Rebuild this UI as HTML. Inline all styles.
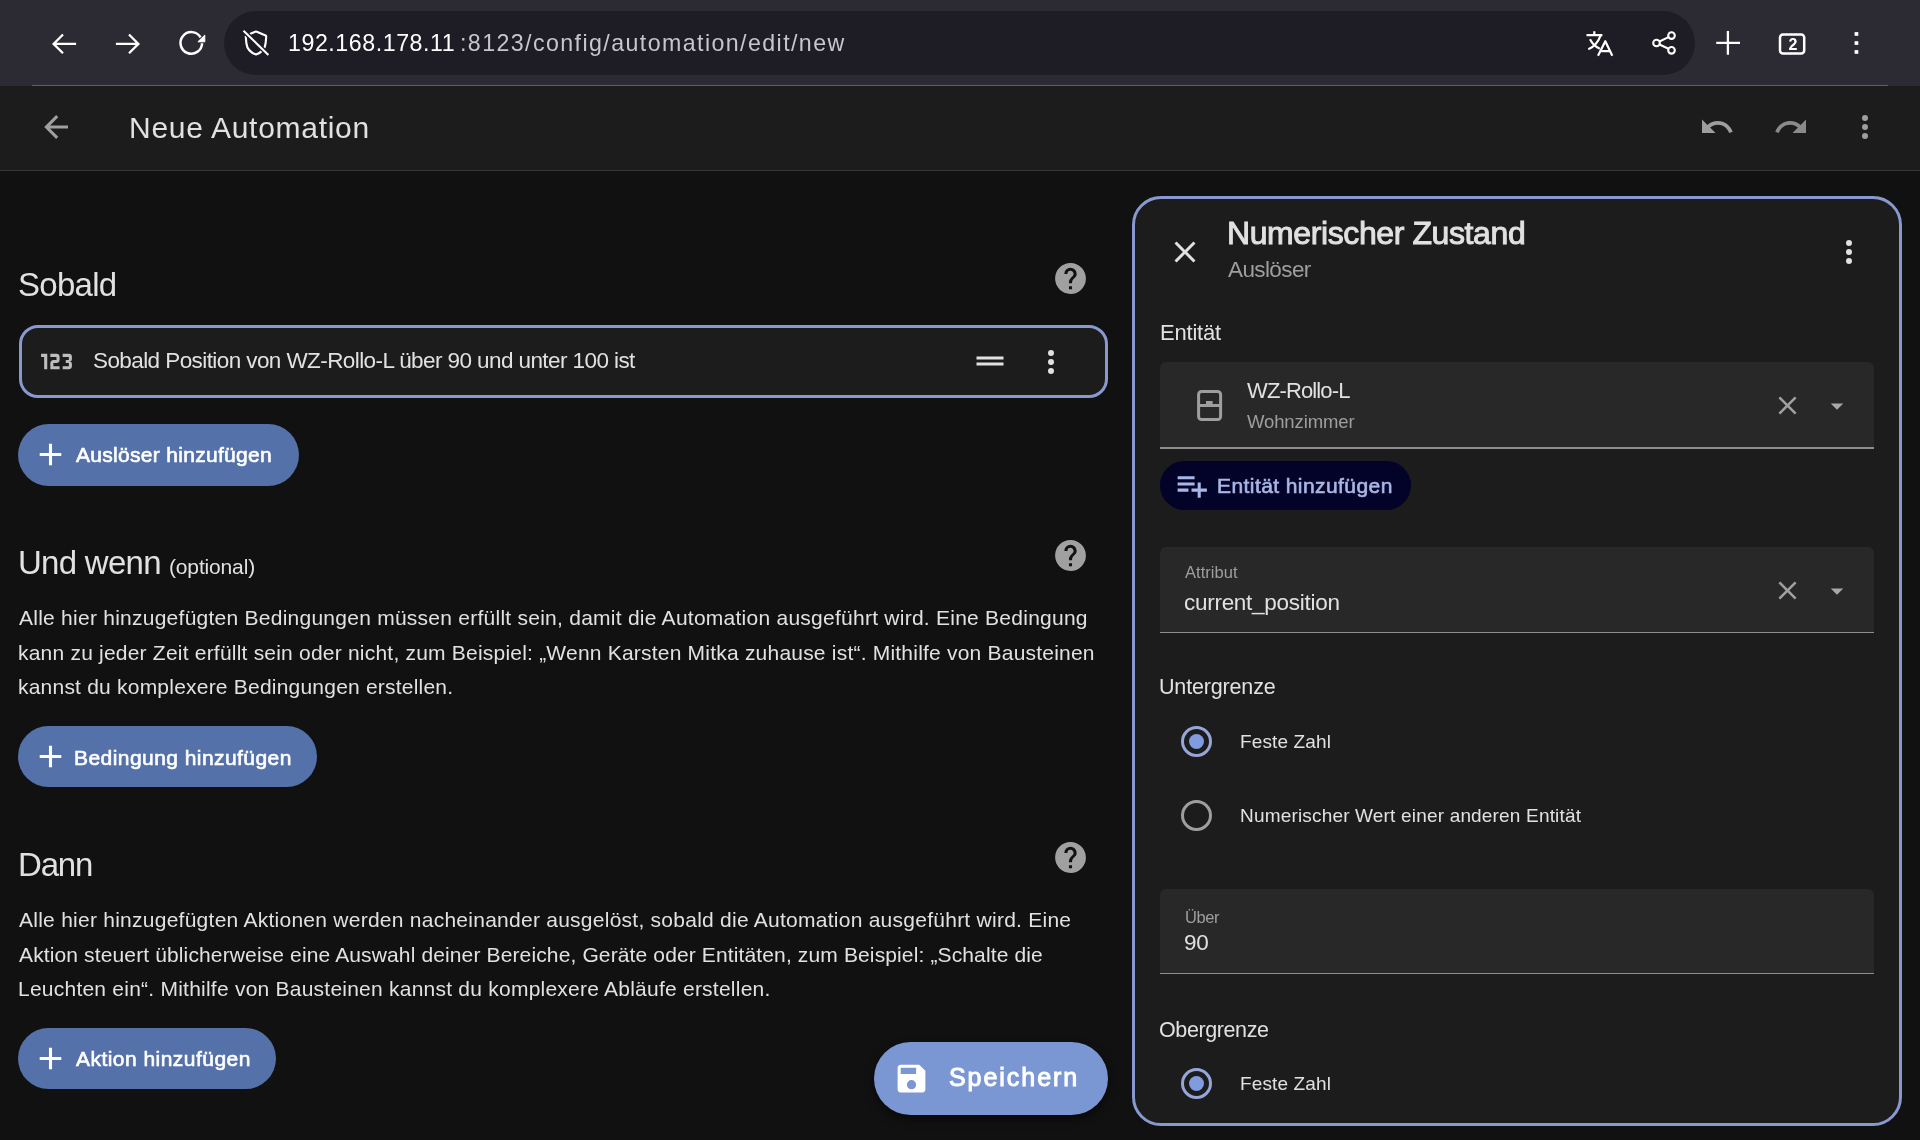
<!DOCTYPE html>
<html><head><meta charset="utf-8"><style>
html,body{margin:0;padding:0;width:1920px;height:1140px;overflow:hidden;background:#111111;font-family:"Liberation Sans",sans-serif;}
.a{position:absolute;box-sizing:border-box;}
.t{position:absolute;white-space:nowrap;line-height:1;will-change:transform;}
.ic{position:absolute;overflow:visible;}
</style></head><body>
<div class="a" style="left:0;top:0;width:1920px;height:86px;background:#2c2a33;"></div>
<div class="a" style="left:32px;top:85px;width:1856px;height:1px;background:#5f5d66;"></div>
<div class="a" style="left:224px;top:11px;width:1471px;height:64px;border-radius:32px;background:#1e1c24;"></div>
<div class="a" style="left:0;top:86px;width:1920px;height:84px;background:#1c1c1c;"></div>
<div class="a" style="left:0;top:170px;width:1920px;height:1px;background:#363636;"></div>
<!-- trigger card -->
<div class="a" style="left:19px;top:325px;width:1089px;height:73px;border:3px solid #8899cf;border-radius:19px;background:#1c1c1c;"></div>
<!-- buttons -->
<div class="a" style="left:18px;top:424px;width:281px;height:62px;border-radius:31px;background:#5571a9;"></div>
<div class="a" style="left:18px;top:726px;width:299px;height:61px;border-radius:31px;background:#5571a9;"></div>
<div class="a" style="left:18px;top:1028px;width:258px;height:61px;border-radius:31px;background:#5571a9;"></div>
<!-- FAB -->
<div class="a" style="left:874px;top:1042px;width:234px;height:73px;border-radius:37px;background:#7b97d3;box-shadow:0 4px 10px rgba(0,0,0,0.5);"></div>
<!-- panel -->
<div class="a" style="left:1132px;top:196px;width:770px;height:930px;border:3px solid #8899cf;border-radius:29px;background:#1c1c1c;"></div>
<div class="a" style="left:1160px;top:362px;width:714px;height:87px;border-radius:6px 6px 0 0;background:#282828;border-bottom:2px solid #8e8e8e;"></div>
<div class="a" style="left:1160px;top:461px;width:251px;height:49px;border-radius:25px;background:#03032a;"></div>
<div class="a" style="left:1160px;top:547px;width:714px;height:86px;border-radius:6px 6px 0 0;background:#282828;border-bottom:1px solid #8e8e8e;"></div>
<div class="a" style="left:1160px;top:889px;width:714px;height:85px;border-radius:6px 6px 0 0;background:#282828;border-bottom:1px solid #8e8e8e;"></div>
<!-- radios -->
<div class="a" style="left:1181px;top:726px;width:31px;height:31px;border-radius:50%;border:3px solid #97a6d8;"></div>
<div class="a" style="left:1189px;top:734px;width:15px;height:15px;border-radius:50%;background:#819be0;"></div>
<div class="a" style="left:1181px;top:800px;width:31px;height:31px;border-radius:50%;border:3px solid #9e9e9e;"></div>
<div class="a" style="left:1181px;top:1068px;width:31px;height:31px;border-radius:50%;border:3px solid #97a6d8;"></div>
<div class="a" style="left:1189px;top:1076px;width:15px;height:15px;border-radius:50%;background:#819be0;"></div>
<!-- cover icon -->
<svg class="ic" style="left:1190px;top:385px;width:40px;height:40px" viewBox="0 0 40 40"><rect x="8.6" y="6.5" width="22" height="28" rx="3" fill="none" stroke="#9e9e9e" stroke-width="3"/><line x1="8.6" y1="20.5" x2="30.6" y2="20.5" stroke="#9e9e9e" stroke-width="3"/><rect x="16" y="16" width="6.6" height="4" fill="#9e9e9e"/></svg>
<svg class="ic" style="left:0;top:0;width:1920px;height:86px" viewBox="0 0 1920 86" fill="none" stroke="#ffffff" stroke-width="2.3">
<path d="M76.1,43.9H53.5M63,34.5L53.6,43.9L63,53.3"/>
<path d="M115.9,43.9H138.5M129,34.5L138.4,43.9L129,53.3"/>
<path d="M200.56,37.34A10.8,10.8 0 1 0 202.09,43.28" stroke-width="2.5"/>
<path d="M204.8,35.1L204.8,41.8L197.9,41.8Z" fill="#ffffff" stroke="#ffffff" stroke-width="1" stroke-linejoin="miter"/>
<path d="M255.2,31.7Q256,31.3 256.8,31.7L265.6,35.5Q266.3,35.9 266.2,36.8L265.6,43.5Q264.6,51.5 256,54.5Q247.4,51.5 246.4,43.5L245.8,36.8Q245.7,35.9 246.4,35.5Z" stroke-width="2.1" stroke-linejoin="round"/>
<path d="M243.5,30.8L268.4,54.9" stroke="#1e1c24" stroke-width="4.8"/>
<path d="M243.5,30.8L268.4,54.9" stroke-width="2.1"/>
<g stroke-width="2.2" stroke-linejoin="round">
<path d="M1594.3,31.3V35.1M1586.5,35.1H1602.4M1600.6,35.6Q1596.5,46 1588.3,49.3M1590,39.3Q1593.5,46 1599.8,48.8"/>
<path d="M1598,55.7L1605.3,41.2L1612.3,55.7M1600.3,51.1H1609.8"/>
</g>
<g stroke-width="2.1">
<circle cx="1671.5" cy="35.6" r="3.3"/><circle cx="1656.5" cy="43" r="3.3"/><circle cx="1671.5" cy="50.3" r="3.3"/>
<path d="M1659.5,41.5L1668.5,37.1M1659.5,44.5L1668.5,48.8"/>
</g>
<path d="M1716.2,42.9H1740M1727.9,31V54.8" stroke-width="2.3"/>
<rect x="1780" y="34.45" width="24.2" height="19.1" rx="3" stroke-width="2.5"/>
<g fill="#ffffff" stroke="none"><rect x="1854.6" y="32.1" width="3.7" height="3.7"/><rect x="1854.6" y="41.2" width="3.7" height="3.7"/><rect x="1854.6" y="50.1" width="3.7" height="3.7"/></g>
</svg>
<div class="a" style="left:1783.8px;top:36.8px;width:18px;text-align:center;line-height:1;font-size:16px;font-weight:700;color:#fff;will-change:transform;">2</div>
<svg class="ic" style="left:38.00px;top:109.00px;width:36px;height:36px;" viewBox="0 0 24 24"><path fill="#a0a0a0" d="M20,11V13H8L13.5,18.5L12.08,19.92L4.16,12L12.08,4.08L13.5,5.5L8,11H20Z"/></svg><svg class="ic" style="left:1698.50px;top:109.00px;width:36px;height:36px;" viewBox="0 0 24 24"><path fill="#9e9e9e" d="M12.5,8C9.85,8 7.45,9 5.6,10.6L2,7V16H11L7.38,12.38C8.77,11.22 10.54,10.5 12.5,10.5C16.04,10.5 19.05,12.81 20.1,16L22.47,15.22C21.08,11.03 17.15,8 12.5,8Z"/></svg><svg class="ic" style="left:1772.50px;top:109.00px;width:36px;height:36px;" viewBox="0 0 24 24"><path fill="#8a8a8a" d="M18.4,10.6C16.55,9 14.15,8 11.5,8C6.85,8 2.92,11.03 1.54,15.22L3.9,16C4.95,12.81 7.95,10.5 11.5,10.5C13.45,10.5 15.23,11.22 16.62,12.38L13,16H22V7L18.4,10.6Z"/></svg><svg class="ic" style="left:1846.50px;top:109.30px;width:36px;height:36px;" viewBox="0 0 24 24"><path fill="#9e9e9e" d="M12,16A2,2 0 0,1 14,18A2,2 0 0,1 12,20A2,2 0 0,1 10,18A2,2 0 0,1 12,16M12,10A2,2 0 0,1 14,12A2,2 0 0,1 12,14A2,2 0 0,1 10,12A2,2 0 0,1 12,10M12,4A2,2 0 0,1 14,6A2,2 0 0,1 12,8A2,2 0 0,1 10,6A2,2 0 0,1 12,4Z"/></svg><svg class="ic" style="left:1052.00px;top:259.80px;width:37px;height:37px;" viewBox="0 0 24 24"><path fill="#a0a0a0" d="M15.07,11.25L14.17,12.17C13.45,12.89 13,13.5 13,15H11V14.5C11,13.39 11.45,12.39 12.17,11.67L13.41,10.41C13.78,10.05 14,9.55 14,9C14,7.89 13.1,7 12,7A2,2 0 0,0 10,9H8A4,4 0 0,1 12,5A4,4 0 0,1 16,9C16,9.88 15.64,10.67 15.07,11.25M13,19H11V17H13M12,2A10,10 0 0,0 2,12C2,17.52 6.47,22 12,22A10,10 0 0,0 22,12C22,6.47 17.5,2 12,2Z"/></svg><svg class="ic" style="left:1052.00px;top:537.00px;width:37px;height:37px;" viewBox="0 0 24 24"><path fill="#a0a0a0" d="M15.07,11.25L14.17,12.17C13.45,12.89 13,13.5 13,15H11V14.5C11,13.39 11.45,12.39 12.17,11.67L13.41,10.41C13.78,10.05 14,9.55 14,9C14,7.89 13.1,7 12,7A2,2 0 0,0 10,9H8A4,4 0 0,1 12,5A4,4 0 0,1 16,9C16,9.88 15.64,10.67 15.07,11.25M13,19H11V17H13M12,2A10,10 0 0,0 2,12C2,17.52 6.47,22 12,22A10,10 0 0,0 22,12C22,6.47 17.5,2 12,2Z"/></svg><svg class="ic" style="left:1052.00px;top:839.00px;width:37px;height:37px;" viewBox="0 0 24 24"><path fill="#a0a0a0" d="M15.07,11.25L14.17,12.17C13.45,12.89 13,13.5 13,15H11V14.5C11,13.39 11.45,12.39 12.17,11.67L13.41,10.41C13.78,10.05 14,9.55 14,9C14,7.89 13.1,7 12,7A2,2 0 0,0 10,9H8A4,4 0 0,1 12,5A4,4 0 0,1 16,9C16,9.88 15.64,10.67 15.07,11.25M13,19H11V17H13M12,2A10,10 0 0,0 2,12C2,17.52 6.47,22 12,22A10,10 0 0,0 22,12C22,6.47 17.5,2 12,2Z"/></svg><svg class="ic" style="left:37.90px;top:343.10px;width:37px;height:37px;" viewBox="0 0 24 24"><path fill="#bdbdbd" d="M4,17V9H2V7H6V17H4M22,15C22,16.11 21.1,17 20,17H16V15H20V13H18V11H20V9H16V7H20A2,2 0 0,1 22,9V10.5A1.5,1.5 0 0,1 20.5,12A1.5,1.5 0 0,1 22,13.5V15M14,15V17H8V13C8,11.89 8.9,11 10,11H12V9H8V7H12A2,2 0 0,1 14,9V11C14,12.11 13.1,13 12,13H10V15H14Z"/></svg><svg class="ic" style="left:971.50px;top:343.40px;width:36px;height:36px;" viewBox="0 0 24 24"><path fill="#e1e1e1" d="M21,11H3V9H21V11M21,13H3V15H21V13Z"/></svg><svg class="ic" style="left:1033.40px;top:343.50px;width:36px;height:36px;" viewBox="0 0 24 24"><path fill="#e1e1e1" d="M12,16A2,2 0 0,1 14,18A2,2 0 0,1 12,20A2,2 0 0,1 10,18A2,2 0 0,1 12,16M12,10A2,2 0 0,1 14,12A2,2 0 0,1 12,14A2,2 0 0,1 10,12A2,2 0 0,1 12,10M12,4A2,2 0 0,1 14,6A2,2 0 0,1 12,8A2,2 0 0,1 10,6A2,2 0 0,1 12,4Z"/></svg><svg class="ic" style="left:31.90px;top:435.90px;width:37px;height:37px;" viewBox="0 0 24 24"><path fill="#ffffff" d="M19,13H13V19H11V13H5V11H11V5H13V11H19V13Z"/></svg><svg class="ic" style="left:32.00px;top:737.90px;width:37px;height:37px;" viewBox="0 0 24 24"><path fill="#ffffff" d="M19,13H13V19H11V13H5V11H11V5H13V11H19V13Z"/></svg><svg class="ic" style="left:32.00px;top:1040.10px;width:37px;height:37px;" viewBox="0 0 24 24"><path fill="#ffffff" d="M19,13H13V19H11V13H5V11H11V5H13V11H19V13Z"/></svg><svg class="ic" style="left:892.90px;top:1059.60px;width:37px;height:37px;" viewBox="0 0 24 24"><path fill="#ffffff" d="M15,9H5V5H15M12,19A3,3 0 0,1 9,16A3,3 0 0,1 12,13A3,3 0 0,1 15,16A3,3 0 0,1 12,19M17,3H5C3.89,3 3,3.9 3,5V19A2,2 0 0,0 5,21H19A2,2 0 0,0 21,19V7L17,3Z"/></svg><svg class="ic" style="left:1166.50px;top:233.60px;width:36px;height:36px;" viewBox="0 0 24 24"><path fill="#e1e1e1" d="M19,6.41L17.59,5L12,10.59L6.41,5L5,6.41L10.59,12L5,17.59L6.41,19L12,13.41L17.59,19L19,17.59L13.41,12L19,6.41Z"/></svg><svg class="ic" style="left:1831.40px;top:233.70px;width:36px;height:36px;" viewBox="0 0 24 24"><path fill="#e1e1e1" d="M12,16A2,2 0 0,1 14,18A2,2 0 0,1 12,20A2,2 0 0,1 10,18A2,2 0 0,1 12,16M12,10A2,2 0 0,1 14,12A2,2 0 0,1 12,14A2,2 0 0,1 10,12A2,2 0 0,1 12,10M12,4A2,2 0 0,1 14,6A2,2 0 0,1 12,8A2,2 0 0,1 10,6A2,2 0 0,1 12,4Z"/></svg><svg class="ic" style="left:1772.00px;top:390.10px;width:31px;height:31px;" viewBox="0 0 24 24"><path fill="#a0a0a0" d="M19,6.41L17.59,5L12,10.59L6.41,5L5,6.41L10.59,12L5,17.59L6.41,19L12,13.41L17.59,19L19,17.59L13.41,12L19,6.41Z"/></svg><svg class="ic" style="left:1821.70px;top:390.60px;width:30px;height:30px;" viewBox="0 0 24 24"><path fill="#a8a8a8" d="M7,10L12,15L17,10H7Z"/></svg><svg class="ic" style="left:1172.90px;top:466.80px;width:37px;height:37px;" viewBox="0 0 24 24"><path fill="#a8b7e6" d="M3 16H10V14H3M18 14V10H16V14H12V16H16V20H18V16H22V14M14 6H3V8H14M14 10H3V12H14V10Z"/></svg><svg class="ic" style="left:1772.00px;top:574.90px;width:31px;height:31px;" viewBox="0 0 24 24"><path fill="#a0a0a0" d="M19,6.41L17.59,5L12,10.59L6.41,5L5,6.41L10.59,12L5,17.59L6.41,19L12,13.41L17.59,19L19,17.59L13.41,12L19,6.41Z"/></svg><svg class="ic" style="left:1821.70px;top:575.60px;width:30px;height:30px;" viewBox="0 0 24 24"><path fill="#a8a8a8" d="M7,10L12,15L17,10H7Z"/></svg>
<div class="t" id="url_a" style="left:288.00px;top:32.06px;font-size:23.2px;color:#ffffff;font-weight:400;letter-spacing:0.554px;">192.168.178.11</div>
<div class="t" id="url_b" style="left:460.00px;top:32.06px;font-size:23.2px;color:#c8c6cc;font-weight:400;letter-spacing:1.416px;">:8123/config/automation/edit/new</div>
<div class="t" id="title" style="left:128.50px;top:112.91px;font-size:30px;color:#e1e1e1;font-weight:400;letter-spacing:0.714px;">Neue Automation</div>
<div class="t" id="h_sobald" style="left:18.00px;top:268.37px;font-size:33px;color:#e1e1e1;font-weight:400;letter-spacing:-0.720px;">Sobald</div>
<div class="t" id="trig" style="left:93.00px;top:349.65px;font-size:22.5px;color:#e1e1e1;font-weight:400;letter-spacing:-0.585px;">Sobald Position von WZ-Rollo-L über 90 und unter 100 ist</div>
<div class="t" id="btn1" style="left:76.00px;top:443.92px;font-size:21px;color:#ffffff;font-weight:400;-webkit-text-stroke:0.63px #ffffff;letter-spacing:0.300px;">Auslöser hinzufügen</div>
<div class="t" id="h_und" style="left:17.50px;top:545.97px;font-size:33px;color:#e1e1e1;font-weight:400;letter-spacing:-0.714px;">Und wenn</div>
<div class="t" id="h_opt" style="left:169.00px;top:556.12px;font-size:21px;color:#e1e1e1;font-weight:400;letter-spacing:-0.156px;">(optional)</div>
<div class="t" id="p1a" style="left:19.00px;top:607.12px;font-size:21px;color:#e1e1e1;font-weight:400;letter-spacing:0.252px;">Alle hier hinzugefügten Bedingungen müssen erfüllt sein, damit die Automation ausgeführt wird. Eine Bedingung</div>
<div class="t" id="p1b" style="left:18.00px;top:642.22px;font-size:21px;color:#e1e1e1;font-weight:400;letter-spacing:0.211px;">kann zu jeder Zeit erfüllt sein oder nicht, zum Beispiel: „Wenn Karsten Mitka zuhause ist“. Mithilfe von Bausteinen</div>
<div class="t" id="p1c" style="left:18.00px;top:676.22px;font-size:21px;color:#e1e1e1;font-weight:400;letter-spacing:0.214px;">kannst du komplexere Bedingungen erstellen.</div>
<div class="t" id="btn2" style="left:74.00px;top:747.22px;font-size:21px;color:#ffffff;font-weight:400;-webkit-text-stroke:0.63px #ffffff;letter-spacing:0.442px;">Bedingung hinzufügen</div>
<div class="t" id="h_dann" style="left:18.00px;top:848.37px;font-size:33px;color:#e1e1e1;font-weight:400;letter-spacing:-1.167px;">Dann</div>
<div class="t" id="p2a" style="left:19.00px;top:908.62px;font-size:21px;color:#e1e1e1;font-weight:400;letter-spacing:0.255px;">Alle hier hinzugefügten Aktionen werden nacheinander ausgelöst, sobald die Automation ausgeführt wird. Eine</div>
<div class="t" id="p2b" style="left:19.00px;top:943.62px;font-size:21px;color:#e1e1e1;font-weight:400;letter-spacing:0.131px;">Aktion steuert üblicherweise eine Auswahl deiner Bereiche, Geräte oder Entitäten, zum Beispiel: „Schalte die</div>
<div class="t" id="p2c" style="left:18.00px;top:977.72px;font-size:21px;color:#e1e1e1;font-weight:400;letter-spacing:0.234px;">Leuchten ein“. Mithilfe von Bausteinen kannst du komplexere Abläufe erstellen.</div>
<div class="t" id="btn3" style="left:76.00px;top:1048.22px;font-size:21px;color:#ffffff;font-weight:400;-webkit-text-stroke:0.63px #ffffff;letter-spacing:0.462px;">Aktion hinzufügen</div>
<div class="t" id="fab" style="left:949.00px;top:1064.84px;font-size:25px;color:#ffffff;font-weight:400;-webkit-text-stroke:1.00px #ffffff;letter-spacing:1.950px;">Speichern</div>
<div class="t" id="pt" style="left:1226.50px;top:216.91px;font-size:32px;color:#e1e1e1;font-weight:400;-webkit-text-stroke:0.96px #e1e1e1;letter-spacing:-0.400px;">Numerischer Zustand</div>
<div class="t" id="ps" style="left:1227.50px;top:259.15px;font-size:22.5px;color:#9e9e9e;font-weight:400;letter-spacing:-0.600px;">Auslöser</div>
<div class="t" id="lbl_ent" style="left:1159.50px;top:322.38px;font-size:22px;color:#e1e1e1;font-weight:400;letter-spacing:-0.200px;">Entität</div>
<div class="t" id="ent_name" style="left:1246.50px;top:379.88px;font-size:22px;color:#e1e1e1;font-weight:400;letter-spacing:-0.867px;">WZ-Rollo-L</div>
<div class="t" id="ent_area" style="left:1247.00px;top:413.04px;font-size:18.5px;color:#9e9e9e;font-weight:400;letter-spacing:-0.111px;">Wohnzimmer</div>
<div class="t" id="btn_ent" style="left:1216.50px;top:475.42px;font-size:21px;color:#a8b7e6;font-weight:400;-webkit-text-stroke:0.63px #a8b7e6;letter-spacing:0.424px;">Entität hinzufügen</div>
<div class="t" id="attr_l" style="left:1185.00px;top:564.03px;font-size:16.5px;color:#9e9e9e;font-weight:400;letter-spacing:0.029px;">Attribut</div>
<div class="t" id="attr_v" style="left:1184.00px;top:591.95px;font-size:22.5px;color:#e1e1e1;font-weight:400;letter-spacing:-0.280px;">current_position</div>
<div class="t" id="untergr" style="left:1159.00px;top:677.00px;font-size:21.5px;color:#e1e1e1;font-weight:400;letter-spacing:-0.160px;">Untergrenze</div>
<div class="t" id="r1" style="left:1240.00px;top:731.82px;font-size:19px;color:#e1e1e1;font-weight:400;letter-spacing:0.133px;">Feste Zahl</div>
<div class="t" id="r2" style="left:1240.00px;top:805.72px;font-size:19px;color:#e1e1e1;font-weight:400;letter-spacing:0.178px;">Numerischer Wert einer anderen Entität</div>
<div class="t" id="ueber_l" style="left:1185.00px;top:909.03px;font-size:16.5px;color:#9e9e9e;font-weight:400;letter-spacing:-0.400px;">Über</div>
<div class="t" id="ueber_v" style="left:1184.00px;top:931.85px;font-size:22.5px;color:#e1e1e1;font-weight:400;letter-spacing:-0.200px;">90</div>
<div class="t" id="obergr" style="left:1159.00px;top:1019.80px;font-size:21.5px;color:#e1e1e1;font-weight:400;letter-spacing:-0.400px;">Obergrenze</div>
<div class="t" id="r3" style="left:1240.00px;top:1074.32px;font-size:19px;color:#e1e1e1;font-weight:400;letter-spacing:0.133px;">Feste Zahl</div>
</body></html>
